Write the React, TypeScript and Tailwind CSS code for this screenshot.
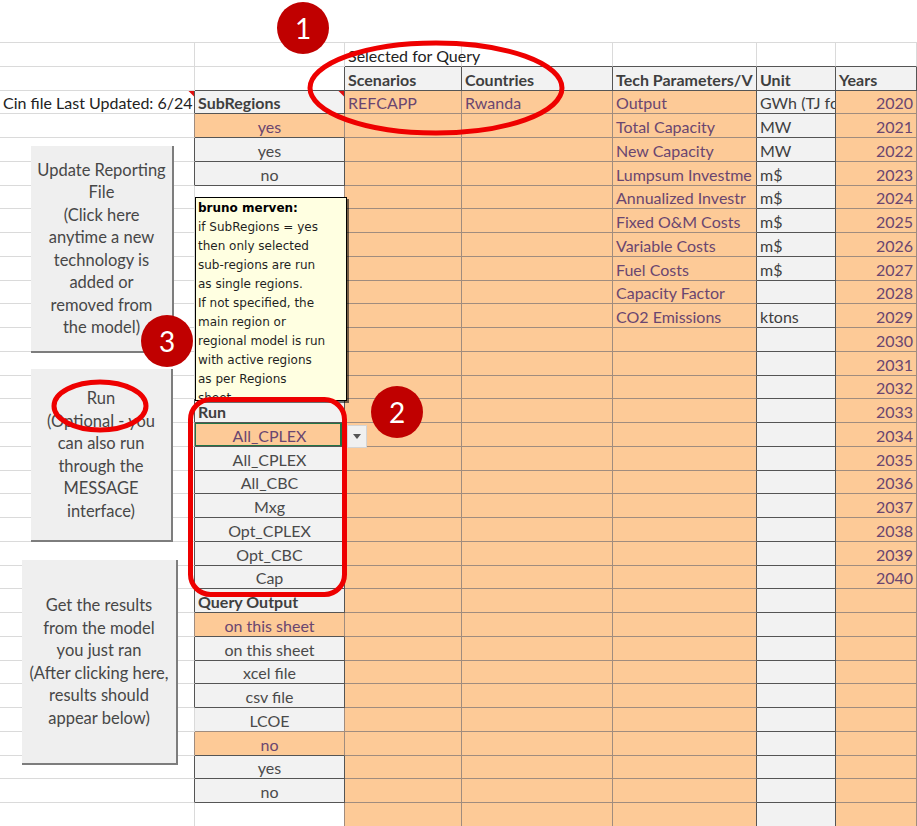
import React from 'react';

type Kind = 'w' | 'o' | 'g' | 'h' | 'u' | 'l';
type Align = 'left' | 'center' | 'right';

interface Cell {
  kind: Kind;
  text?: string;
  align?: Align;
  flag?: boolean;
  selected?: boolean;
  spill?: boolean;
}

const ROW_COUNT = 33;
const COL_COUNT = 7;

// border strength: gridline < input cell < output cell
const level: Record<Kind, 1 | 2 | 3> = { w: 1, l: 1, o: 2, g: 3, h: 3, u: 3 };

const rightLine = { 1: 'border-r-[#dadada]', 2: 'border-r-[#a08c7e]', 3: 'border-r-[#555555]' };
const bottomLine = { 1: 'border-b-[#dadada]', 2: 'border-b-[#a08c7e]', 3: 'border-b-[#555555]' };

const fill: Record<Kind, string> = {
  w: 'bg-white text-[#222222]',
  l: 'bg-[#f2f2f2] text-[#4a4a4a]',
  o: 'bg-[#fdca97] text-[#6a4670]',
  g: 'bg-[#f2f2f2] text-[#4a4a4a]',
  h: 'bg-[#f2f2f2] text-[#3f3f3f] font-bold',
  u: 'bg-[#f2f2f2] text-[#3f3f3f]',
};

const justify: Record<Align, string> = {
  left: 'justify-start',
  center: 'justify-center',
  right: 'justify-end',
};

// texts as far as the column width shows them
const techParams = [
  'Output',
  'Total Capacity',
  'New Capacity',
  'Lumpsum Investme',
  'Annualized Investr',
  'Fixed O&M Costs',
  'Variable Costs',
  'Fuel Costs',
  'Capacity Factor',
  'CO2 Emissions',
];
const units = ['GWh (TJ fo', 'MW', 'MW', 'm$', 'm$', 'm$', 'm$', 'm$', '', 'ktons'];

const colB: [number, Kind, string][] = [
  [2, 'h', 'SubRegions'],
  [3, 'o', 'yes'],
  [4, 'g', 'yes'],
  [5, 'g', 'no'],
  [15, 'h', 'Run'],
  [16, 'o', 'All_CPLEX'],
  [17, 'g', 'All_CPLEX'],
  [18, 'g', 'All_CBC'],
  [19, 'g', 'Mxg'],
  [20, 'g', 'Opt_CPLEX'],
  [21, 'g', 'Opt_CBC'],
  [22, 'g', 'Cap'],
  [23, 'h', 'Query Output'],
  [24, 'o', 'on this sheet'],
  [25, 'g', 'on this sheet'],
  [26, 'g', 'xcel file'],
  [27, 'g', 'csv file'],
  [28, 'l', 'LCOE'],
  [29, 'o', 'no'],
  [30, 'g', 'yes'],
  [31, 'g', 'no'],
];

function buildSheet(): Cell[][] {
  const rows: Cell[][] = Array.from({ length: ROW_COUNT }, () =>
    Array.from({ length: COL_COUNT }, () => ({ kind: 'w' as Kind }))
  );

  rows[2][0] = { kind: 'w', text: 'Cin file Last Updated: 6/24', flag: true };

  colB.forEach(([r, kind, text]) => {
    rows[r][1] = { kind, text, align: kind === 'h' ? 'left' : 'center' };
  });
  rows[2][1].flag = true;
  rows[16][1].selected = true;

  rows[0][2] = { kind: 'w', text: 'Selected for Query', spill: true };
  const headers = ['Scenarios', 'Countries', 'Tech Parameters/V', 'Unit', 'Years'];
  headers.forEach((h, i) => {
    rows[1][i + 2] = { kind: 'h', text: h };
  });

  for (let r = 2; r < ROW_COUNT; r++) {
    rows[r][2] = { kind: 'o' };
    rows[r][3] = { kind: 'o' };
    rows[r][4] = { kind: 'o', text: techParams[r - 2] };
    rows[r][5] = { kind: 'u', text: units[r - 2] };
    rows[r][6] = { kind: 'o', text: r <= 22 ? String(2018 + r) : undefined, align: 'right' };
  }
  rows[2][2].text = 'REFCAPP';
  rows[2][3].text = 'Rwanda';

  return rows;
}

const sheet = buildSheet();

const SheetCell: React.FC<{ r: number; c: number }> = ({ r, c }) => {
  const cell = sheet[r][c];
  const right = Math.max(level[cell.kind], c + 1 < COL_COUNT ? level[sheet[r][c + 1].kind] : 1) as 1 | 2 | 3;
  const below = Math.max(level[cell.kind], r + 1 < ROW_COUNT ? level[sheet[r + 1][c].kind] : 1) as 1 | 2 | 3;

  return (
    <div
      className={`relative flex items-end border-r border-b px-[3px] pb-px leading-[19px] whitespace-nowrap ${
        fill[cell.kind]
      } ${rightLine[right]} ${bottomLine[below]} ${justify[cell.align ?? 'left']} ${
        cell.spill ? 'z-10 overflow-visible' : 'overflow-hidden'
      }`}
    >
      {cell.text}
      {cell.flag && (
        <span className="absolute right-0 top-0 h-[6px] w-[6px] bg-[#e01010] [clip-path:polygon(0_0,100%_0,100%_100%)]" />
      )}
      {cell.selected && <span className="absolute -left-px -top-px -bottom-px right-[2px] border-2 border-[#227447]" />}
    </div>
  );
};

const ShapeButton: React.FC<{ lines: string[]; className: string }> = ({ lines, className }) => (
  <div
    className={`flex flex-col items-center justify-center border-r-2 border-b-2 border-[#7d7d7d] bg-[#efefef] text-[16.5px] leading-[22.5px] text-[#474747] whitespace-nowrap ${className}`}
  >
    {lines.map((line) => (
      <span key={line}>{line}</span>
    ))}
  </div>
);

const Badge: React.FC<{ n: number; className: string }> = ({ n, className }) => (
  <div
    className={`absolute flex h-[52px] w-[52px] items-center justify-center rounded-full bg-[#c00000] text-[28px] text-white ${className}`}
  >
    {n}
  </div>
);

const commentLines = [
  'if SubRegions = yes',
  'then only selected',
  'sub-regions are run',
  'as single regions.',
  'If not specified, the',
  'main region or',
  'regional model is run',
  'with active regions',
  'as per Regions',
  'sheet',
];

export default function App() {
  return (
    <div className="relative h-[826px] w-[917px] overflow-hidden bg-white font-[Lato,sans-serif] text-[16px]">
      <div className="h-[42px]" />

      <div className="grid grid-cols-[195px_150px_117px_151px_144px_79px_81px] auto-rows-[23.75px] border-t border-[#dadada]">
        {sheet.map((row, r) => row.map((_, c) => <SheetCell key={`${r}-${c}`} r={r} c={c} />))}
      </div>

      {/* macro buttons floating over column A */}
      <div className="absolute left-0 top-[146px] z-20 flex flex-col items-start gap-4">
        <ShapeButton
          className="ml-[31px] h-[207px] w-[143px]"
          lines={[
            'Update Reporting',
            'File',
            '(Click here',
            'anytime a new',
            'technology is',
            'added or',
            'removed from',
            'the model)',
          ]}
        />
        <ShapeButton
          className="ml-[31px] h-[173px] w-[142px]"
          lines={['Run', '(Optional - you', 'can also run', 'through the', 'MESSAGE', 'interface)']}
        />
        <ShapeButton
          className="ml-[22px] mt-[2px] h-[205px] w-[156px]"
          lines={[
            'Get the results',
            'from the model',
            'you just ran',
            '(After clicking here,',
            'results should',
            'appear below)',
          ]}
        />
      </div>

      {/* cell comment */}
      <div className="absolute left-[195px] top-[197px] z-20 h-[204px] w-[152px] overflow-hidden border border-black bg-[#ffffe1] px-[2px] pt-px font-['DejaVu_Sans',sans-serif] text-[12px] leading-[19px] text-[#1f1f1f] shadow-[2px_2px_0_rgba(0,0,0,0.55)]">
        <div className="font-bold text-black">bruno merven:</div>
        {commentLines.map((line) => (
          <div key={line} className="whitespace-nowrap">
            {line}
          </div>
        ))}
      </div>

      {/* validation dropdown */}
      <div className="absolute left-[347px] top-[425px] z-20 flex h-[23px] w-[20px] items-center justify-center border border-[#d4d4d4] bg-[#f0f0f0]">
        <svg width="8" height="5" viewBox="0 0 8 5">
          <path d="M0 0h8L4 5z" fill="#555" />
        </svg>
      </div>

      <svg className="pointer-events-none absolute left-0 top-0 z-30" width="917" height="826">
        <ellipse cx="436" cy="88" rx="126" ry="45" fill="none" stroke="#ee0000" strokeWidth="5" />
        <rect x="190.5" y="399.5" width="154" height="195" rx="20" fill="none" stroke="#ee0000" strokeWidth="5" />
        <ellipse cx="100" cy="406" rx="46" ry="24" fill="none" stroke="#ee0000" strokeWidth="5" />
      </svg>

      <div className="z-40">
        <Badge n={1} className="left-[277px] top-[2px] z-40" />
        <Badge n={2} className="left-[371px] top-[386px] z-40" />
        <Badge n={3} className="left-[141px] top-[315px] z-40" />
      </div>
    </div>
  );
}
